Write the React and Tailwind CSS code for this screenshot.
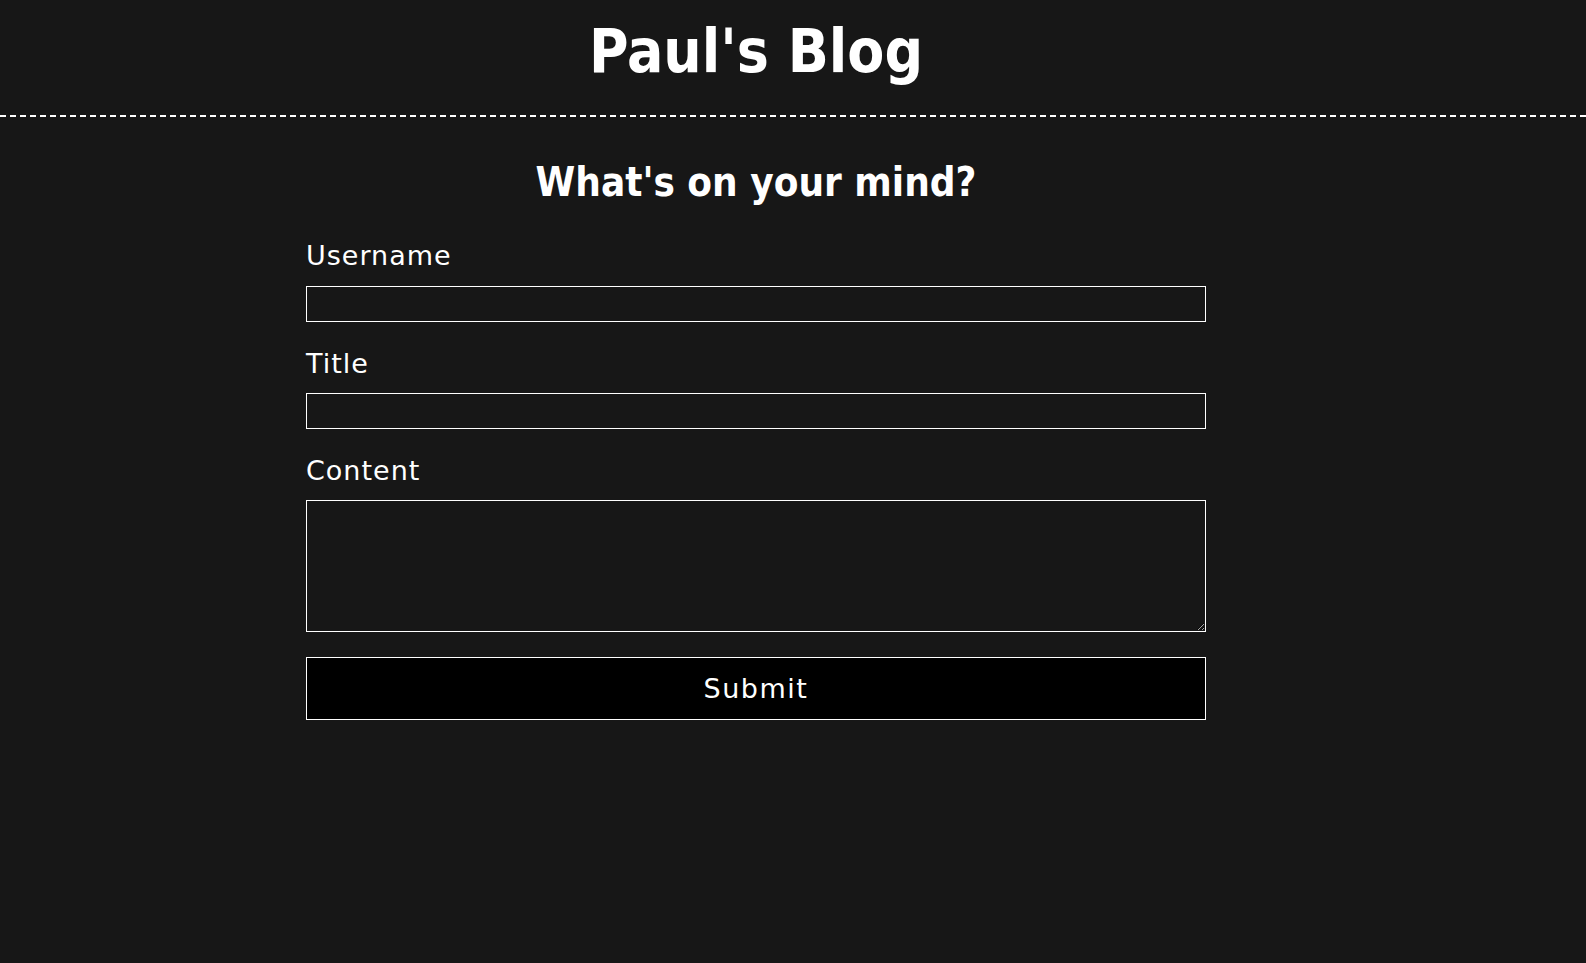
export default function App() {
  return (
    <div className="min-h-screen bg-[#171717] text-white font-['DejaVu_Sans',sans-serif]">

      {/* Header */}

      <header className="border-b-2 border-dashed border-white pt-[21px] pb-[34px]">
        <div className="w-[900px] ml-[306px] text-center">
          <h1 className="font-['DejaVu_Sans_Condensed','DejaVu_Sans',sans-serif] font-bold text-[60px] leading-none">
            Paul's Blog
          </h1>
        </div>
      </header>

      {/* Form */}

      <main className="w-[900px] ml-[306px] pt-[45px]">

        <h2 className="font-['DejaVu_Sans_Condensed','DejaVu_Sans',sans-serif] font-bold text-[40px] leading-none text-center mb-10">
          What's on your mind?
        </h2>

        <form className="flex flex-col">

          <label className="block text-[27px] leading-none tracking-[1px] mb-[17px]">
            Username
          </label>
          <input
            type="text"
            className="block w-full h-9 border border-white bg-transparent outline-none"
          />

          <label className="block text-[27px] leading-none tracking-[1px] mt-7 mb-4">
            Title
          </label>
          <input
            type="text"
            className="block w-full h-9 border border-white bg-transparent outline-none"
          />

          <label className="block text-[27px] leading-none tracking-[1px] mt-7 mb-4">
            Content
          </label>
          <textarea className="block w-full h-[132px] border border-white bg-transparent outline-none" />

          <button
            type="button"
            className="mt-[25px] w-full h-[63px] bg-black border border-white text-[27px] leading-none tracking-[1.5px]"
          >
            Submit
          </button>

        </form>
      </main>

    </div>
  );
}
